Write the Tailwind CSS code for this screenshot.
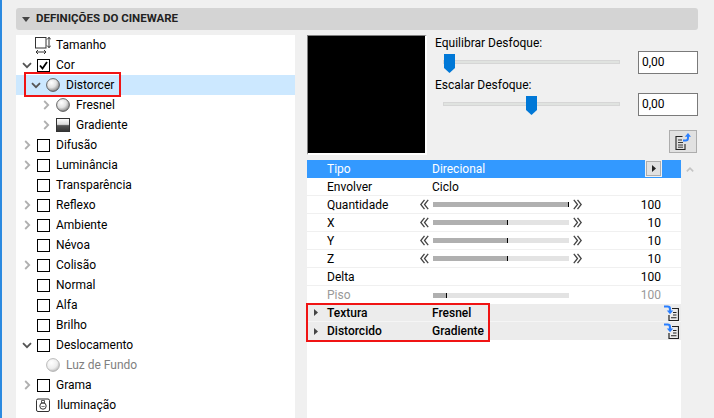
<!doctype html>
<html lang="en">
<head>
<meta charset="UTF-8">
<title>Definições do Cineware</title>
<script src="https://cdn.jsdelivr.net/npm/@tailwindcss/browser@4"></script>
</head>
<body class="bg-[#f0f0f0] text-black h-[418px] overflow-hidden font-['Roboto',sans-serif] text-[12px] leading-none">
<svg class="absolute size-0" aria-hidden="true">
    <defs>
        <radialGradient id="ball" cx="0.38" cy="0.32" r="0.75">
            <stop offset="0" stop-color="#ffffff"/>
            <stop offset="0.5" stop-color="#e2e2e2"/>
            <stop offset="1" stop-color="#777777"/>
        </radialGradient>
        <radialGradient id="ball-off" cx="0.38" cy="0.32" r="0.75">
            <stop offset="0" stop-color="#ffffff"/>
            <stop offset="0.6" stop-color="#eeeeee"/>
            <stop offset="1" stop-color="#b5b5b5"/>
        </radialGradient>
        <linearGradient id="grad" x1="0" y1="0" x2="0" y2="1">
            <stop offset="0" stop-color="#ffffff"/>
            <stop offset="0.45" stop-color="#dddddd"/>
            <stop offset="0.55" stop-color="#555555"/>
            <stop offset="1" stop-color="#333333"/>
        </linearGradient>
        <symbol id="down" viewBox="0 0 10 7"><path d="M1 1.2 5 5.2 9 1.2" fill="none" stroke="#555" stroke-width="1.8"/></symbol>
        <symbol id="right" viewBox="0 0 7 10"><path d="M1.2 1 5.2 5 1.2 9" fill="none" stroke="#b0b0b0" stroke-width="1.8"/></symbol>
        <symbol id="sphere" viewBox="0 0 14 14"><circle cx="7" cy="7" r="6.4" fill="url(#ball)" stroke="#444" stroke-width="0.8"/></symbol>
        <symbol id="sphere-off" viewBox="0 0 14 14"><circle cx="7" cy="7" r="6.4" fill="url(#ball-off)" stroke="#aaa" stroke-width="0.8"/></symbol>
        <symbol id="dbl-left" viewBox="0 0 9 11"><path d="M4.5 .8 .8 5.5 4.5 10.2M8.2 .8 4.5 5.5 8.2 10.2" fill="none" stroke="#444" stroke-width="1.3"/></symbol>
        <symbol id="dbl-right" viewBox="0 0 9 11"><path d="M.8 .8 4.5 5.5 .8 10.2M4.5 .8 8.2 5.5 4.5 10.2" fill="none" stroke="#444" stroke-width="1.3"/></symbol>
        <symbol id="doc-in" viewBox="0 0 15 16">
            <path d="M8 3.5H14.5V15.5H5V10" fill="none" stroke="#222" stroke-width="1.2"/>
            <path d="M9 7.5h3.5M9 10h3.5M7 12.8h5.5" stroke="#222" stroke-width="1.1"/>
            <path d="M0 1.5h3.5Q6 1.5 6 4v2" fill="none" stroke="#2a7fff" stroke-width="2.2"/>
            <path d="M2.8 5.5H9.2L6 9.2Z" fill="#2a7fff"/>
        </symbol>
    </defs>
</svg>
<div class="absolute left-0 top-0 w-[2px] h-full bg-[#2b8ae0]"></div>

<div class="pl-4 pr-4 pt-2">
    <!-- section header -->
    <header class="h-[22px] bg-[#d4d4d4] rounded-[3px] flex items-center pl-[6px] font-bold text-[#222] text-[11.5px]">
        <svg class="w-2 h-[5px] mr-[6px]" viewBox="0 0 8 5"><path d="M0 0h8L4 5Z" fill="#444"/></svg>
        DEFINIÇÕES DO CINEWARE
    </header>

    <div class="flex mt-[5px] gap-3">
        <!-- channel tree -->
        <ul class="w-[279px] h-[383px] bg-white shrink-0">
            <li class="flex items-center h-5">
                <span class="w-[19px]"></span>
                <svg class="w-4 h-[17px] mr-1" viewBox="0 0 16 17">
                    <rect x=".5" y=".5" width="10.5" height="10.5" fill="none" stroke="#333"/>
                    <path d="M14 0v11M12 2.5 14 .5l2 2M12 8.5l2 2 2-2M1 15h10M3 13l-2 2 2 2M9 13l2 2-2 2" fill="none" stroke="#333"/>
                </svg>
                <span class="ml-px">Tamanho</span>
            </li>
            <li class="flex items-center h-5">
                <span class="w-[21px] flex justify-center pl-[1px]"><svg class="w-[10px] h-[7px]"><use href="#down"/></svg></span>
                <span class="size-[13px] border border-black flex items-center justify-center">
                    <svg class="size-[11px]" viewBox="0 0 11 11"><path d="M2 5.5 4.5 8.5 9 2" fill="none" stroke="#000" stroke-width="1.8"/></svg>
                </span>
                <span class="ml-[6px]">Cor</span>
            </li>
            <li class="flex items-center h-5 bg-[#cce8ff] pl-[10px]">
                <span class="w-5 flex justify-center pr-[1px]"><svg class="w-[10px] h-[7px]"><use href="#down"/></svg></span>
                <svg class="size-[14px]"><use href="#sphere"/></svg>
                <span class="ml-[6px]">Distorcer</span>
            </li>
            <li class="flex items-center h-5 pl-5">
                <span class="w-5 flex justify-center"><svg class="w-[7px] h-[10px]"><use href="#right"/></svg></span>
                <svg class="size-[14px]"><use href="#sphere"/></svg>
                <span class="ml-[6px]">Fresnel</span>
            </li>
            <li class="flex items-center h-5 pl-5">
                <span class="w-5 flex justify-center"><svg class="w-[7px] h-[10px]"><use href="#right"/></svg></span>
                <svg class="size-[14px]" viewBox="0 0 14 14"><rect x=".5" y=".5" width="13" height="13" fill="url(#grad)" stroke="#333"/></svg>
                <span class="ml-[6px]">Gradiente</span>
            </li>
            <li class="flex items-center h-5">
                <span class="w-[21px] flex justify-center pl-[1px]"><svg class="w-[7px] h-[10px]"><use href="#right"/></svg></span>
                <span class="size-[13px] border border-black"></span>
                <span class="ml-[6px]">Difusão</span>
            </li>
            <li class="flex items-center h-5">
                <span class="w-[21px] flex justify-center pl-[1px]"><svg class="w-[7px] h-[10px]"><use href="#right"/></svg></span>
                <span class="size-[13px] border border-black"></span>
                <span class="ml-[6px]">Luminância</span>
            </li>
            <li class="flex items-center h-5">
                <span class="w-[21px]"></span>
                <span class="size-[13px] border border-black"></span>
                <span class="ml-[6px]">Transparência</span>
            </li>
            <li class="flex items-center h-5">
                <span class="w-[21px] flex justify-center pl-[1px]"><svg class="w-[7px] h-[10px]"><use href="#right"/></svg></span>
                <span class="size-[13px] border border-black"></span>
                <span class="ml-[6px]">Reflexo</span>
            </li>
            <li class="flex items-center h-5">
                <span class="w-[21px] flex justify-center pl-[1px]"><svg class="w-[7px] h-[10px]"><use href="#right"/></svg></span>
                <span class="size-[13px] border border-black"></span>
                <span class="ml-[6px]">Ambiente</span>
            </li>
            <li class="flex items-center h-5">
                <span class="w-[21px]"></span>
                <span class="size-[13px] border border-black"></span>
                <span class="ml-[6px]">Névoa</span>
            </li>
            <li class="flex items-center h-5">
                <span class="w-[21px] flex justify-center pl-[1px]"><svg class="w-[7px] h-[10px]"><use href="#right"/></svg></span>
                <span class="size-[13px] border border-black"></span>
                <span class="ml-[6px]">Colisão</span>
            </li>
            <li class="flex items-center h-5">
                <span class="w-[21px]"></span>
                <span class="size-[13px] border border-black"></span>
                <span class="ml-[6px]">Normal</span>
            </li>
            <li class="flex items-center h-5">
                <span class="w-[21px]"></span>
                <span class="size-[13px] border border-black"></span>
                <span class="ml-[6px]">Alfa</span>
            </li>
            <li class="flex items-center h-5">
                <span class="w-[21px]"></span>
                <span class="size-[13px] border border-black"></span>
                <span class="ml-[6px]">Brilho</span>
            </li>
            <li class="flex items-center h-5">
                <span class="w-[21px] flex justify-center pl-[1px]"><svg class="w-[10px] h-[7px]"><use href="#down"/></svg></span>
                <span class="size-[13px] border border-black"></span>
                <span class="ml-[6px]">Deslocamento</span>
            </li>
            <li class="flex items-center h-5 pl-[30px] text-[#808080]">
                <svg class="size-[14px]"><use href="#sphere-off"/></svg>
                <span class="ml-[6px]">Luz de Fundo</span>
            </li>
            <li class="flex items-center h-5">
                <span class="w-[21px] flex justify-center pl-[1px]"><svg class="w-[7px] h-[10px]"><use href="#right"/></svg></span>
                <span class="size-[13px] border border-black"></span>
                <span class="ml-[6px]">Grama</span>
            </li>
            <li class="flex items-center h-5">
                <span class="w-5"></span>
                <svg class="size-[14px]" viewBox="0 0 14 14">
                    <rect x=".5" y="1" width="13" height="12.5" rx="1.5" fill="none" stroke="#333"/>
                    <circle cx="7" cy="8" r="3.2" fill="none" stroke="#333"/>
                    <path d="M5.5 2.5h3v2.5h-3zM5.5 8l1 1 1-1 1 1" fill="none" stroke="#333" stroke-width=".8"/>
                </svg>
                <span class="ml-[7px]">Iluminação</span>
            </li>
        </ul>

        <!-- right side -->
        <div class="flex-1 min-w-0">
            <div class="flex h-[125px]">
                <div class="size-[120px] bg-black border-t border-l border-[#808080] border-r-2 border-b-2 border-r-white border-b-white shrink-0"></div>
                <div class="ml-[8px] flex-1">
                    <p class="h-[16px] flex items-center">Equilibrar Desfoque:</p>
                    <div class="flex items-center h-[22px]">
                        <div class="relative ml-2 w-[177px] h-1 bg-[#e0e3e0] border border-[#d6d6d6]">
                            <svg class="absolute left-0 top-[-7px] w-[11px] h-[19px]" viewBox="0 0 11 19"><path d="M0 0h11v14l-5.5 5L0 14Z" fill="#0078d7"/></svg>
                        </div>
                        <span class="ml-[18px] w-[60px] h-[23px] bg-white border border-[#7a7a7a] flex items-center pl-[3px]">0,00</span>
                    </div>
                    <p class="h-[16px] mt-[4px] flex items-center">Escalar Desfoque:</p>
                    <div class="flex items-center h-[22px]">
                        <div class="relative ml-2 w-[177px] h-1 bg-[#e0e3e0] border border-[#d6d6d6]">
                            <svg class="absolute left-[82px] top-[-7px] w-[11px] h-[19px]" viewBox="0 0 11 19"><path d="M0 0h11v14l-5.5 5L0 14Z" fill="#0078d7"/></svg>
                        </div>
                        <span class="ml-[18px] w-[60px] h-[23px] bg-white border border-[#7a7a7a] flex items-center pl-[3px]">0,00</span>
                    </div>
                    <div class="flex justify-end mt-[15px] pr-[1px]">
                        <button class="w-[28px] h-[23px] bg-[#e1e1e1] border border-[#adadad] flex items-center justify-center">
                            <svg class="w-[16px] h-[17px]" viewBox="0 0 16 17">
                                <path d="M7.5 3.5H1v13h9V11" fill="none" stroke="#222" stroke-width="1.1"/>
                                <path d="M3 7h4M3 9.5h5M3 12h5M3 14.2h5" stroke="#222" stroke-width=".9"/>
                                <path d="M8 7.5h2.5Q13 7.5 13 5V3" fill="none" stroke="#2a7fff" stroke-width="2"/>
                                <path d="M9.8 3.8H16L13 0Z" fill="#2a7fff"/>
                            </svg>
                        </button>
                    </div>
                </div>
            </div>

            <!-- parameter table -->
            <div class="flex">
                <div class="w-[374px] h-[258px] bg-white shrink-0">
                    <div class="flex items-center h-[18px] bg-[#3399ff] text-white pl-5 relative">
                        <span class="w-[105px]">Tipo</span>
                        <span>Direcional</span>
                        <span class="absolute left-[338px] top-0 w-[17px] h-[17px] bg-[#f0f0f0] flex items-center justify-center">
                            <span class="w-[15px] h-[15px] bg-[#e1e1e1] border border-[#adadad] flex items-center justify-center">
                                <svg class="w-1 h-[7px]" viewBox="0 0 4 7"><path d="M0 0 4 3.5 0 7Z" fill="#222"/></svg>
                            </span>
                        </span>
                    </div>
                    <div class="flex items-center h-[18px] pl-5 border-b border-[#f0f0f0]">
                        <span class="w-[105px]">Envolver</span>
                        <span>Ciclo</span>
                    </div>
                    <div class="flex items-center h-[18px] pl-5 border-b border-[#f0f0f0]">
                        <span class="w-[93px]">Quantidade</span>
                        <svg class="w-[9px] h-[11px] mr-[4px]"><use href="#dbl-left"/></svg>
                        <span class="w-[136px] h-[5px] bg-[#e3e3e3] flex"><span class="w-full bg-[#b0b0b0] border-r border-black"></span></span>
                        <svg class="w-[9px] h-[11px] ml-[4px]"><use href="#dbl-right"/></svg>
                        <span class="w-[79px] text-right">100</span>
                    </div>
                    <div class="flex items-center h-[18px] pl-5 border-b border-[#f0f0f0]">
                        <span class="w-[93px]">X</span>
                        <svg class="w-[9px] h-[11px] mr-[4px]"><use href="#dbl-left"/></svg>
                        <span class="w-[136px] h-[5px] bg-[#e3e3e3] flex"><span class="w-[75px] bg-[#b0b0b0] border-r border-black"></span></span>
                        <svg class="w-[9px] h-[11px] ml-[4px]"><use href="#dbl-right"/></svg>
                        <span class="w-[79px] text-right">10</span>
                    </div>
                    <div class="flex items-center h-[18px] pl-5 border-b border-[#f0f0f0]">
                        <span class="w-[93px]">Y</span>
                        <svg class="w-[9px] h-[11px] mr-[4px]"><use href="#dbl-left"/></svg>
                        <span class="w-[136px] h-[5px] bg-[#e3e3e3] flex"><span class="w-[75px] bg-[#b0b0b0] border-r border-black"></span></span>
                        <svg class="w-[9px] h-[11px] ml-[4px]"><use href="#dbl-right"/></svg>
                        <span class="w-[79px] text-right">10</span>
                    </div>
                    <div class="flex items-center h-[18px] pl-5 border-b border-[#f0f0f0]">
                        <span class="w-[93px]">Z</span>
                        <svg class="w-[9px] h-[11px] mr-[4px]"><use href="#dbl-left"/></svg>
                        <span class="w-[136px] h-[5px] bg-[#e3e3e3] flex"><span class="w-[75px] bg-[#b0b0b0] border-r border-black"></span></span>
                        <svg class="w-[9px] h-[11px] ml-[4px]"><use href="#dbl-right"/></svg>
                        <span class="w-[79px] text-right">10</span>
                    </div>
                    <div class="flex items-center h-[18px] pl-5 border-b border-[#f0f0f0]">
                        <span class="w-[93px]">Delta</span>
                        <span class="w-[13px]"></span>
                        <span class="w-[136px]"></span>
                        <span class="w-[13px]"></span>
                        <span class="w-[79px] text-right">100</span>
                    </div>
                    <div class="flex items-center h-[18px] pl-5 text-[#999]">
                        <span class="w-[93px]">Piso</span>
                        <span class="w-[13px]"></span>
                        <span class="w-[136px] h-[5px] bg-[#e3e3e3] flex"><span class="w-[14px] bg-[#b0b0b0] border-r border-black"></span></span>
                        <span class="w-[13px]"></span>
                        <span class="w-[79px] text-right">100</span>
                    </div>
                    <div class="flex items-center h-[18px] bg-[#ececec] pl-[7px] pr-[2px] font-medium border-b border-[#f5f5f5]">
                        <svg class="w-1 h-[7px] mr-[9px]" viewBox="0 0 4 7"><path d="M0 0 4 3.5 0 7Z" fill="#444"/></svg>
                        <span class="w-[105px]">Textura</span>
                        <span class="flex-1">Fresnel</span>
                        <svg class="w-[15px] h-4"><use href="#doc-in"/></svg>
                    </div>
                    <div class="flex items-center h-[18px] bg-[#ececec] pl-[7px] pr-[2px] font-medium">
                        <svg class="w-1 h-[7px] mr-[9px]" viewBox="0 0 4 7"><path d="M0 0 4 3.5 0 7Z" fill="#444"/></svg>
                        <span class="w-[105px]">Distorcido</span>
                        <span class="flex-1">Gradiente</span>
                        <svg class="w-[15px] h-4"><use href="#doc-in"/></svg>
                    </div>
                </div>
                <div class="flex-1 flex justify-center pt-[7px]">
                    <svg class="w-2 h-[5px]" viewBox="0 0 8 5"><path d="M.8 4.4 4 1.2l3.2 3.2" fill="none" stroke="#c4c4c4" stroke-width="1.6"/></svg>
                </div>
            </div>
        </div>
    </div>
</div>

<!-- callouts drawn over the screenshot -->
<div class="absolute left-[24px] top-[72px] w-[97px] h-[25px] border-2 border-[#f01414]"></div>
<div class="absolute left-[306px] top-[303px] w-[184px] h-[39px] border-2 border-[#f01414]"></div>
</body>
</html>
